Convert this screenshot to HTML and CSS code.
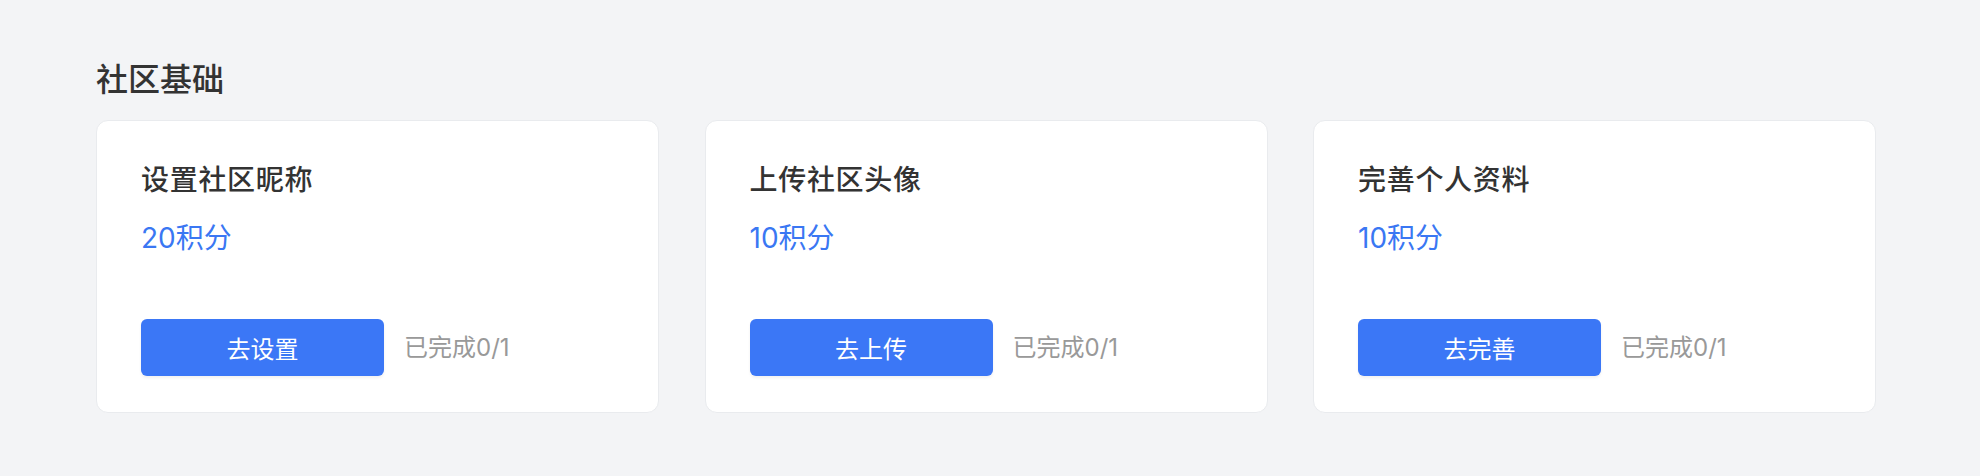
FILE: index.html
```html
<!DOCTYPE html>
<html lang="zh-CN">
<head>
<meta charset="utf-8">
<title>社区基础</title>
<link rel="stylesheet" href="styles.css">
</head>
<body>
<main class="page">
  <h2 class="section-title">社区基础</h2>
  <div class="task-grid">
    <div class="task-card">
      <div class="task-name">设置社区昵称</div>
      <div class="task-points">20积分</div>
      <div class="task-actions">
        <button class="task-btn">去设置</button>
        <span class="task-status">已完成0/1</span>
      </div>
    </div>
    <div class="task-card">
      <div class="task-name">上传社区头像</div>
      <div class="task-points">10积分</div>
      <div class="task-actions">
        <button class="task-btn">去上传</button>
        <span class="task-status">已完成0/1</span>
      </div>
    </div>
    <div class="task-card">
      <div class="task-name">完善个人资料</div>
      <div class="task-points">10积分</div>
      <div class="task-actions">
        <button class="task-btn">去完善</button>
        <span class="task-status">已完成0/1</span>
      </div>
    </div>
  </div>
</main>
</body>
</html>
```
FILE: styles.css
```css
* {
  box-sizing: border-box;
}

html, body {
  margin: 0;
  padding: 0;
  background: #f3f4f6;
}

body {
  font-family: "Noto Sans CJK SC", "Noto Sans", "Liberation Sans", sans-serif;
  color: #333333;
}

.page {
  padding: 55px 104px 0 96px;
}

.section-title {
  margin: 0 0 21px 0;
  font-size: 32px;
  line-height: 44px;
  font-weight: 500;
  color: #333333;
}

.task-grid {
  display: grid;
  grid-template-columns: repeat(3, 563px);
  column-gap: 45.5px;
  width: 1780px;
}

.task-card {
  background: #ffffff;
  border: 1px solid #e9ebee;
  border-radius: 12px;
  height: 293px;
  padding: 37px 44px 36px 44px;
  display: flex;
  flex-direction: column;
}

.task-name {
  font-size: 28px;
  line-height: 40px;
  font-weight: 500;
  letter-spacing: 0.7px;
  color: #333333;
}

.task-points {
  margin-top: 20px;
  font-family: "Inter", "Noto Sans CJK SC", sans-serif;
  font-size: 28px;
  line-height: 40px;
  color: #3a77f3;
}

.task-actions {
  margin-top: auto;
  display: flex;
  align-items: center;
  gap: 20px;
}

.task-btn {
  width: 243px;
  height: 57px;
  border: none;
  border-radius: 6px;
  background: #3b77f6;
  color: #ffffff;
  font-family: inherit;
  font-size: 24px;
  line-height: 57px;
  padding: 0;
  box-shadow: 0 2px 3px rgba(0, 0, 0, 0.06);
  cursor: pointer;
}

.task-status {
  font-family: "Inter", "Noto Sans CJK SC", sans-serif;
  font-size: 24px;
  line-height: 34px;
  color: #999999;
}
```
